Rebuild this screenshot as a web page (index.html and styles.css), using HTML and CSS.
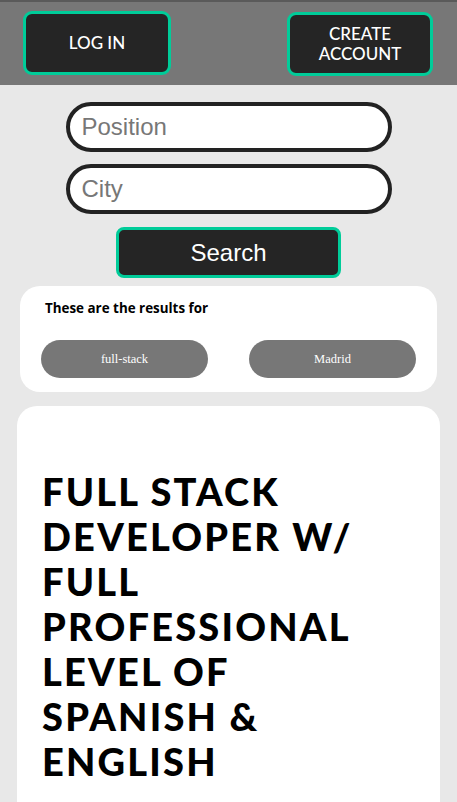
FILE: index.html
```html
<!DOCTYPE html>
<html>
<head>
<meta charset="utf-8">
<link rel="stylesheet" href="styles.css">
</head>
<body>
<header class="topbar">
  <button class="nav-btn login">LOG IN</button>
  <button class="nav-btn create">CREATE<br>ACCOUNT</button>
</header>
<form class="search">
  <input class="field" type="text" placeholder="Position">
  <input class="field" type="text" placeholder="City">
  <button class="search-btn" type="button">Search</button>
</form>
<section class="results">
  <p class="results-title">These are the results for</p>
  <div class="pills">
    <span class="pill">full-stack</span>
    <span class="pill">Madrid</span>
  </div>
</section>
<article class="job">
  <h1 class="job-title">FULL STACK DEVELOPER W/ FULL PROFESSIONAL LEVEL OF SPANISH &amp; ENGLISH</h1>
</article>
</body>
</html>
```
FILE: styles.css
```css
* { box-sizing: border-box; }
html, body { margin: 0; padding: 0; }
body {
  background: #e8e8e8;
  font-family: "Lato", "Liberation Sans", sans-serif;
  overflow: hidden;
  height: 802px;
}
.topbar {
  background: #777777;
  border-top: 2px solid #5a5a5a;
  height: 85px;
  display: flex;
  justify-content: space-between;
  align-items: flex-start;
  padding: 9px 24px 0 23px;
}
.nav-btn {
  background: #252525;
  color: #ffffff;
  border: 3px solid #00cc99;
  border-radius: 9px;
  font-family: "Lato", sans-serif;
  font-size: 17px;
  line-height: 20px;
  font-weight: 500;
  padding: 0;
}
.login { width: 148px; height: 64px; }
.create { width: 146px; height: 64px; margin-top: 1px; }
.search {
  display: flex;
  flex-direction: column;
  align-items: center;
  padding-top: 17px;
  margin: 0;
}
.field {
  width: 326px;
  height: 50px;
  border: 4px solid #222222;
  border-radius: 25px;
  background: #ffffff;
  font-family: "Liberation Sans", Arial, sans-serif;
  font-size: 24px;
  padding: 0 12px;
  color: #222;
}
.field::placeholder { color: #777777; }
.field + .field { margin-top: 12px; }
.search-btn {
  margin-top: 13px;
  width: 225px;
  height: 51px;
  background: #252525;
  color: #ffffff;
  border: 3px solid #00cc99;
  border-radius: 8px;
  font-family: "Liberation Sans", Arial, sans-serif;
  font-size: 24px;
}
.results {
  margin: 8px 20px 0 20px;
  height: 106px;
  background: #ffffff;
  border-radius: 20px;
  padding: 13px 21px 0 21px;
}
.results-title {
  margin: 0 0 0 4px;
  font-family: "Open Sans", sans-serif;
  font-weight: 700;
  font-size: 13.4px;
  line-height: 18px;
  color: #000;
}
.pills {
  display: flex;
  justify-content: space-between;
  margin-top: 23px;
}
.pill {
  width: 167px;
  height: 38px;
  border-radius: 19px;
  background: #777777;
  color: #ffffff;
  font-family: "Liberation Serif", "Times New Roman", serif;
  font-size: 12.5px;
  display: flex;
  align-items: center;
  justify-content: center;
}
.job {
  margin: 14px 17px 0 17px;
  background: #ffffff;
  border-radius: 20px 20px 0 0;
  height: 420px;
  padding: 63px 25px 0 25px;
}
.job-title {
  margin: 0;
  font-family: "Lato", sans-serif;
  font-weight: 900;
  font-size: 38px;
  line-height: 45px;
  letter-spacing: 2.2px;
  color: #000;
  width: 350px;
}
```
